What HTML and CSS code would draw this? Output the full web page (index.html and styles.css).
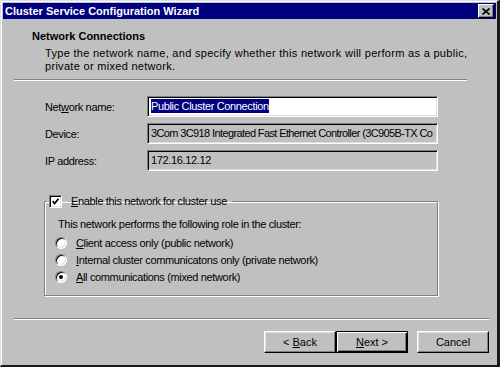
FILE: index.html
```html
<!DOCTYPE html>
<html lang="en">
<head>
    <meta charset="UTF-8">
    <title>Cluster Service Configuration Wizard</title>
    <link rel="stylesheet" href="styles.css">
</head>
<body>
    <div class="window">
        <div class="titlebar">
            <span class="title">Cluster Service Configuration Wizard</span>
            <span class="close-btn">
                <svg width="8" height="7" viewBox="0 0 8 7"><path d="M0.5 0.5 L7.5 6.5 M7.5 0.5 L0.5 6.5" stroke="#000" stroke-width="1.6" fill="none"/></svg>
            </span>
        </div>

        <div class="header">
            <h1>Network Connections</h1>
            <p>Type the network name, and specify whether this network will perform as a public,<br>private or mixed network.</p>
        </div>
        <div class="divider divider-top"></div>

        <div class="form">
            <div class="row">
                <label>Net<u>w</u>ork name:</label>
                <div class="field editable"><span class="selected">Public Cluster Connection</span></div>
            </div>
            <div class="row">
                <label>Device:</label>
                <div class="field device">3Com 3C918 Integrated Fast Ethernet Controller (3C905B-TX Co</div>
            </div>
            <div class="row">
                <label>IP address:</label>
                <div class="field">172.16.12.12</div>
            </div>
        </div>

        <fieldset class="group">
            <legend>
                <span class="checkbox">
                    <svg width="7" height="7" viewBox="0 0 7 7"><path d="M0.5 3 L2.5 5.5 L6.5 0.8" stroke="#000" stroke-width="1.8" fill="none"/></svg>
                </span>
                <span><u>E</u>nable this network for cluster use</span>
            </legend>
            <p class="group-text">This network performs the following role in the cluster:</p>
            <div class="radio-row"><span class="radio"></span><span><u>C</u>lient access only (public network)</span></div>
            <div class="radio-row"><span class="radio"></span><span><u>I</u>nternal cluster communicatons only (private network)</span></div>
            <div class="radio-row"><span class="radio checked"></span><span><u>A</u>ll communications (mixed network)</span></div>
        </fieldset>

        <div class="divider divider-bottom"></div>

        <div class="buttons">
            <button class="btn">&lt; <u>B</u>ack</button>
            <button class="btn default"><u>N</u>ext &gt;</button>
            <button class="btn cancel">Cancel</button>
        </div>
    </div>
</body>
</html>
```
FILE: styles.css
```css
html, body {
    margin: 0;
    padding: 0;
}

body {
    font-family: "Liberation Sans", Arial, sans-serif;
    font-size: 11px;
    color: #000;
    background: #c0c0c0;
}

.window {
    box-sizing: border-box;
    width: 500px;
    height: 367px;
    background: #c0c0c0;
    border-top: 1px solid #dfdfdf;
    border-left: 1px solid #dfdfdf;
    border-right: 3px solid #1c1a10;
    border-bottom: 2px solid #1c1a10;
    box-shadow: inset 1px 1px 0 #fff;
    padding: 2px 1px 0 2px;
}

/* title bar */
.titlebar {
    height: 16px;
    background: #000080;
    color: #fff;
    display: flex;
    align-items: center;
    justify-content: space-between;
    padding: 0 2px 0 2px;
}

.title {
    font-weight: bold;
    font-size: 11px;
    line-height: 14px;
}

.close-btn {
    box-sizing: border-box;
    width: 16px;
    height: 14px;
    background: #c0c0c0;
    border-top: 1px solid #fff;
    border-left: 1px solid #fff;
    border-right: 1px solid #000;
    border-bottom: 1px solid #000;
    box-shadow: inset -1px -1px 0 #808080;
    display: flex;
    align-items: center;
    justify-content: center;
}

/* header */
.header {
    box-sizing: border-box;
    height: 60px;
    padding: 11px 0 0 29px;
}

.header h1 {
    margin: 0;
    font-size: 11px;
    font-weight: bold;
    line-height: 13px;
}

.header p {
    margin: 4px 0 0 13px;
    line-height: 13px;
    letter-spacing: 0.3px;
}

.divider {
    height: 0;
    border-top: 1px solid #808080;
    border-bottom: 1px solid #fff;
    margin-left: 11px;
}

.divider-top {
    width: 453px;
}

.divider-bottom {
    width: 475px;
    margin-top: 22px;
}

/* form rows */
.form {
    margin-top: 15px;
    padding-left: 42px;
    display: flex;
    flex-direction: column;
    gap: 6px;
    letter-spacing: -0.35px;
}

.row {
    display: flex;
    align-items: center;
    height: 21px;
}

.row label {
    width: 102px;
}

.field {
    box-sizing: border-box;
    width: 291px;
    height: 21px;
    border-top: 1px solid #808080;
    border-left: 1px solid #808080;
    border-right: 1px solid #fff;
    border-bottom: 1px solid #fff;
    box-shadow: inset 1px 1px 0 #000, inset -1px -1px 0 #dfdfdf;
    padding: 0 0 0 3px;
    line-height: 19px;
    white-space: nowrap;
    overflow: hidden;
    background: #c0c0c0;
}

.field.editable {
    background: #fff;
}

.field.device {
    letter-spacing: -0.62px;
}

.selected {
    background: #000080;
    color: #fff;
    padding: 1px 0;
}

/* group box */
.group {
    box-sizing: border-box;
    margin: 23px 0 0 41px;
    width: 394px;
    padding: 9px 0 10px 13px;
    border: 1px solid #808080;
    box-shadow: 1px 1px 0 #fff, inset 1px 1px 0 #fff;
    letter-spacing: -0.35px;
}

.group legend {
    margin-left: -11px;
    padding: 0 5px 0 2px;
    display: flex;
    align-items: center;
    gap: 9px;
    line-height: 14px;
}

.checkbox {
    box-sizing: border-box;
    width: 13px;
    height: 13px;
    background: #fff;
    border-top: 1px solid #808080;
    border-left: 1px solid #808080;
    border-right: 1px solid #fff;
    border-bottom: 1px solid #fff;
    box-shadow: inset 1px 1px 0 #000, inset -1px -1px 0 #dfdfdf;
    display: flex;
    align-items: center;
    justify-content: center;
}

.group-text {
    margin: 0 0 3px 0;
    line-height: 14px;
}

.radio-row {
    display: flex;
    align-items: center;
    height: 17px;
    margin-left: -3px;
    gap: 9px;
}

.radio {
    box-sizing: border-box;
    width: 12px;
    height: 12px;
    border-radius: 50%;
    background: #fff;
    border-top: 1px solid #808080;
    border-left: 1px solid #808080;
    border-right: 1px solid #fff;
    border-bottom: 1px solid #fff;
    box-shadow: inset 1px 1px 0 #000, inset -1px -1px 0 #dfdfdf;
    position: relative;
}

.radio.checked::after {
    content: "";
    position: absolute;
    left: 3px;
    top: 3px;
    width: 4px;
    height: 4px;
    border-radius: 50%;
    background: #000;
}

/* buttons */
.buttons {
    display: flex;
    justify-content: flex-end;
    margin-top: 11px;
    padding-right: 7px;
}

.btn {
    box-sizing: border-box;
    width: 72px;
    height: 22px;
    font-family: "Liberation Sans", Arial, sans-serif;
    font-size: 11px;
    color: #000;
    background: #c0c0c0;
    border-top: 1px solid #fff;
    border-left: 1px solid #fff;
    border-right: 1px solid #000;
    border-bottom: 1px solid #000;
    box-shadow: inset -1px -1px 0 #808080, inset 1px 1px 0 #dfdfdf;
    padding: 0;
}

.btn.default {
    border: 1px solid #000;
    box-shadow: inset 1px 1px 0 #fff, inset -1px -1px 0 #000, inset -2px -2px 0 #808080;
}

.btn.cancel {
    margin-left: 9px;
}
```
